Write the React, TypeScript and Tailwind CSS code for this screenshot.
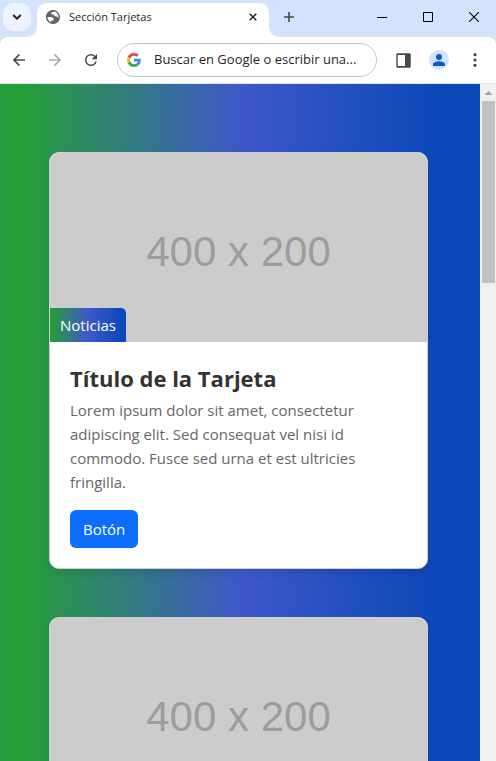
import React from "react";

const PAGE_GRADIENT =
  "bg-[linear-gradient(to_right,#289c40_0%,#269f36_4%,#3f58c9_50%,#0b48b8_92%,#0b48b8_100%)]";

function GlobeIcon() {
  return (
    <svg viewBox="2 2 20 20" className="size-3.5 shrink-0" aria-hidden="true">
      <path
        d="M12 2C6.480 2 2 6.480 2 12s4.480 10 10 10 10-4.480 10-10S17.520 2 12 2zM4 12h4.400c3.400.02 4.900 1.730 4.550 5.130H9.490v2.460C6.220 18.520 4 15.600 4 12zm13.300-.8c-2.750-.24-3.900-.9-3.450-2.050-2.900 0-4.400-.9-4.300-2.700.05-1 .9-1.600 2.150-1.650h1.500c.1-.2.100-.4.050-.65C17.100 4.600 20 7.900 20 12c-.1.350-.2.650-.35.950-.9-.1-1.650-.7-2.350-1.750z"
        fill="#5f6368"
      />
    </svg>
  );
}

function GoogleIcon() {
  return (
    <svg viewBox="0 0 48 48" className="size-3.5 shrink-0" aria-hidden="true">
      <path fill="#EA4335" d="M24 9.500c3.540 0 6.710 1.220 9.210 3.600l6.850-6.850C35.900 2.380 30.470 0 24 0 14.620 0 6.510 5.380 2.560 13.220l7.980 6.190C12.430 13.720 17.740 9.500 24 9.500z" />
      <path fill="#4285F4" d="M46.980 24.550c0-1.570-.15-3.090-.38-4.550H24v9.020h12.940c-.58 2.960-2.260 5.480-4.780 7.180l7.730 6c4.510-4.180 7.090-10.360 7.090-17.650z" />
      <path fill="#FBBC05" d="M10.530 28.590c-.48-1.450-.76-2.990-.76-4.590s.27-3.140.76-4.590l-7.980-6.190C.92 16.460 0 20.120 0 24c0 3.880.92 7.540 2.560 10.780l7.970-6.190z" />
      <path fill="#34A853" d="M24 48c6.480 0 11.930-2.130 15.890-5.810l-7.730-6c-2.150 1.450-4.920 2.300-8.160 2.300-6.260 0-11.570-4.220-13.470-9.910l-7.980 6.190C6.510 42.620 14.620 48 24 48z" />
    </svg>
  );
}

function Flare({ side }: { side: "left" | "right" }) {
  return (
    <svg viewBox="0 0 10 10" className="size-2.5 shrink-0 self-end" aria-hidden="true">
      <path d={side === "left" ? "M10 0v10H0A10 10 0 0 0 10 0z" : "M0 0v10h10A10 10 0 0 1 0 0z"} fill="#fff" />
    </svg>
  );
}

function TabStrip() {
  return (
    <header className="flex h-[37px] shrink-0 bg-[#d3e3fd] pl-[3px]">
      <button
        aria-label="Buscar pestañas"
        className="mt-[3px] -mr-1 flex size-7 shrink-0 items-center justify-center rounded-[10px] bg-[#ecf2ff]"
      >
        <svg viewBox="0 0 10 10" className="size-2.5" fill="none" stroke="#1f1f1f" strokeWidth="2" aria-hidden="true">
          <path d="M1.300 3 5 6.700 8.700 3" />
        </svg>
      </button>
      <Flare side="left" />
      <div className="mt-[3px] flex min-w-0 max-w-[232px] flex-1 items-center rounded-t-[10px] bg-white pr-2.5 pb-1.5 pl-[9px]">
        <GlobeIcon />
        <span className="ml-[9px] flex-1 truncate text-[11px] leading-4 text-[#1f1f1f]">Sección Tarjetas</span>
        <button aria-label="Cerrar pestaña" className="flex size-3 items-center justify-center">
          <svg viewBox="0 0 8 8" className="size-2" stroke="#1f1f1f" strokeWidth="1.500" aria-hidden="true">
            <path d="M.7.7l6.600 6.600M7.300.7.7 7.300" />
          </svg>
        </button>
      </div>
      <Flare side="right" />
      <button aria-label="Nueva pestaña" className="flex h-[34px] w-5 shrink-0 items-center justify-center">
        <svg viewBox="0 0 10 10" className="size-2.5" stroke="#474747" strokeWidth="1.600" aria-hidden="true">
          <path d="M5 0v10M0 5h10" />
        </svg>
      </button>
      <div className="ml-auto flex h-[34px] shrink-0">
        <button aria-label="Minimizar" className="flex w-[46px] items-center justify-center">
          <svg viewBox="0 0 10 10" className="size-2.5" stroke="#000" aria-hidden="true">
            <path d="M0 5.500h10" />
          </svg>
        </button>
        <button aria-label="Maximizar" className="flex w-[46px] items-center justify-center">
          <svg viewBox="0 0 10 10" className="size-2.5" fill="none" stroke="#000" aria-hidden="true">
            <path d="M.5.5h9v9h-9z" />
          </svg>
        </button>
        <button aria-label="Cerrar" className="flex w-[45px] items-center justify-center">
          <svg viewBox="0 0 10 10" className="size-2.5" stroke="#000" strokeWidth="1.100" aria-hidden="true">
            <path d="M0 0l10 10M10 0 0 10" />
          </svg>
        </button>
      </div>
    </header>
  );
}

function Toolbar() {
  return (
    <div className="shrink-0 bg-[#d3e3fd]">
      <nav className="flex h-[47px] items-center rounded-t-lg border-b border-[#dfe1e5] bg-white pr-[9px] pl-[7px]">
        <button aria-label="Atrás" className="mr-3 flex size-6 shrink-0 items-center justify-center">
          <svg viewBox="0 0 12 12" className="size-3" fill="none" stroke="#474747" strokeWidth="1.600" aria-hidden="true">
            <path d="M12 6H1M6.300.6.900 6l5.400 5.400" />
          </svg>
        </button>
        <button aria-label="Adelante" className="mr-3 flex size-6 shrink-0 items-center justify-center">
          <svg viewBox="0 0 12 12" className="size-3" fill="none" stroke="#a8a8a8" strokeWidth="1.600" aria-hidden="true">
            <path d="M0 6h11M5.700.6 11.100 6l-5.400 5.400" />
          </svg>
        </button>
        <button aria-label="Recargar" className="mr-3.5 flex size-6 shrink-0 items-center justify-center">
          <svg viewBox="0 0 24 24" className="size-[18px]" fill="#474747" aria-hidden="true">
            <path d="M17.650 6.350A7.960 7.960 0 0 0 12 4a8 8 0 1 0 7.730 10h-2.080A6 6 0 1 1 12 6c1.660 0 3.140.69 4.220 1.780L13 11h7V4l-2.350 2.350z" />
          </svg>
        </button>
        <label className="flex h-[34px] min-w-0 flex-1 items-center rounded-full border border-[#c4c7c5] pr-3.5 pl-[9px]">
          <GoogleIcon />
          <input
            type="text"
            aria-label="Barra de direcciones"
            placeholder="Buscar en Google o escribir una..."
            className="ml-[13px] w-full min-w-0 bg-transparent text-[13px] text-ellipsis text-[#1f1f1f] outline-none placeholder:text-[#1f1f1f]"
          />
        </label>
        <button aria-label="Panel lateral" className="ml-3.5 flex size-6 shrink-0 items-center justify-center">
          <svg viewBox="0 0 15 15" className="size-[15px]" aria-hidden="true">
            <path d="M1.500.3h12a1.200 1.200 0 0 1 1.200 1.200v12a1.200 1.200 0 0 1-1.200 1.200h-12a1.200 1.200 0 0 1-1.200-1.200v-12A1.200 1.200 0 0 1 1.500.3zm.2 1.700v11H9V2z" fill="#474747" />
          </svg>
        </button>
        <button
          aria-label="Perfil"
          className="ml-3.5 flex size-5 shrink-0 items-center justify-center rounded-full bg-[#d3e3fd]"
        >
          <svg viewBox="0 0 12 12" className="size-3" fill="#0b57d0" aria-hidden="true">
            <circle cx="6" cy="3" r="3" />
            <path d="M0 12v-1.800C0 8.200 3.500 7.200 6 7.200s6 1 6 3V12z" />
          </svg>
        </button>
        <button aria-label="Menú" className="ml-3.5 flex size-6 shrink-0 items-center justify-center">
          <svg viewBox="0 0 4 14" className="h-3.5 w-1" fill="#474747" aria-hidden="true">
            <circle cx="2" cy="1.700" r="1.600" />
            <circle cx="2" cy="7" r="1.600" />
            <circle cx="2" cy="12.300" r="1.600" />
          </svg>
        </button>
      </nav>
    </div>
  );
}

function Card() {
  return (
    <article className="shrink-0 overflow-hidden rounded-[10px] border border-[#d0d0d0] bg-white shadow-[0_4px_8px_rgba(0,0,0,0.1)]">
      <div className="relative flex h-[189px] items-center justify-center bg-[#cccccc]">
        <span className="pt-2 font-['Liberation_Sans',Arial,sans-serif] text-[42px] leading-[48px] text-[#9c9c9c]">
          400 x 200
        </span>
        <span className="absolute bottom-0 left-0 h-[34px] rounded-tr-[5px] bg-[linear-gradient(to_right,#269f36_0%,#3f58c9_50%,#0b48b8_95%)] px-2.5 text-[15px] leading-[34px] text-white">
          Noticias
        </span>
      </div>
      <div className="p-5">
        <h2 className="mb-1 text-[22px] leading-8 font-bold text-[#333]">Título de la Tarjeta</h2>
        <p className="mb-4 text-[15px] leading-6 text-[#666]">
          Lorem ipsum dolor sit amet, consectetur adipiscing elit. Sed consequat vel nisi id commodo. Fusce sed urna et
          est ultricies fringilla.
        </p>
        <a href="#" className="inline-flex h-[38px] items-center rounded-md bg-[#0d6efd] px-[13px] text-[15px] text-white">
          Botón
        </a>
      </div>
    </article>
  );
}

function Scrollbar() {
  return (
    <div className="flex w-4 shrink-0 flex-col items-center bg-[#f1f1f1]" aria-hidden="true">
      <svg viewBox="0 0 16 17" className="h-[17px] w-4 shrink-0" fill="#a3a3a3">
        <path d="M4.500 11 8.500 7l4 4z" />
      </svg>
      <div className="h-[182px] w-[13px] shrink-0 bg-[#c1c1c1]" />
    </div>
  );
}

export default function App() {
  return (
    <div className="flex h-screen flex-col overflow-hidden font-['Open_Sans','Noto_Sans',sans-serif]">
      <TabStrip />
      <Toolbar />
      <div className="flex min-h-0 flex-1">
        <main
          className={`flex min-w-0 flex-1 flex-col gap-12 overflow-y-auto pt-[68px] pr-[52px] pb-12 pl-[49px] [scrollbar-width:none] ${PAGE_GRADIENT}`}
        >
          <Card />
          <Card />
        </main>
        <Scrollbar />
      </div>
    </div>
  );
}
